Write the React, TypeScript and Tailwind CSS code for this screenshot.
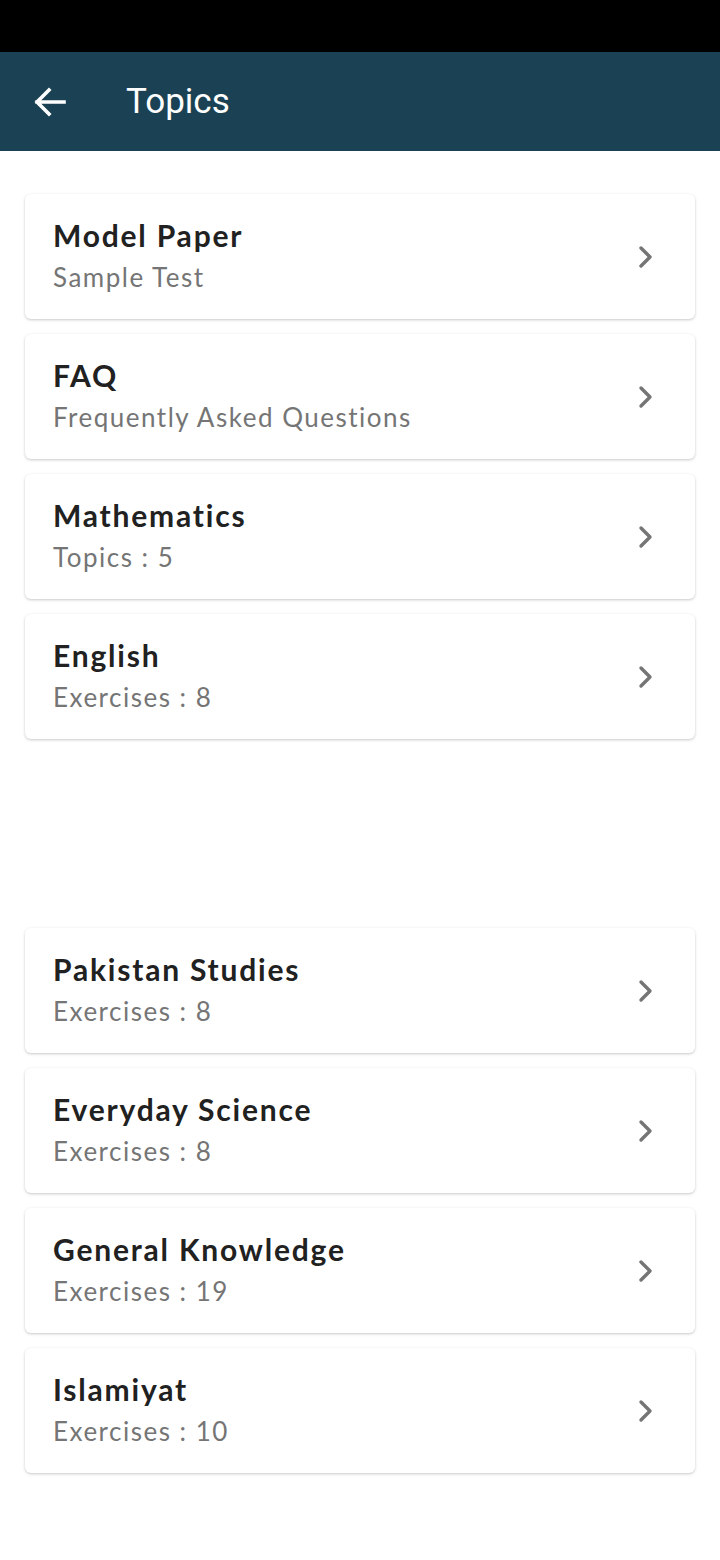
import React from "react";

const top = [
  { t: "Model Paper", s: "Sample Test" },
  { t: "FAQ", s: "Frequently Asked Questions" },
  { t: "Mathematics", s: "Topics : 5" },
  { t: "English", s: "Exercises : 8" },
];
const bottom = [
  { t: "Pakistan Studies", s: "Exercises : 8" },
  { t: "Everyday Science", s: "Exercises : 8" },
  { t: "General Knowledge", s: "Exercises : 19" },
  { t: "Islamiyat", s: "Exercises : 10" },
];

function Card({ t, s }: { t: string; s: string }) {
  return (
    <div className="h-[125px] bg-white rounded-[6px] shadow-[0_1px_3px_rgba(0,0,0,0.22)] flex items-center pl-[28px] pr-[40px]">
      <div className="flex-1 flex flex-col">
        <div className="text-[30px] leading-[36px] font-bold text-[#212121] tracking-[1.8px]">{t}</div>
        <div className="mt-[4px] text-[26px] leading-[40px] text-[#757575] tracking-[1.5px]">{s}</div>
      </div>
      <svg width="18" height="24" viewBox="0 0 18 24" className="shrink-0">
        <path d="M4 3 L13 12 L4 21" fill="none" stroke="#757575" strokeWidth="3.4" strokeLinecap="round" strokeLinejoin="round" />
      </svg>
    </div>
  );
}

export default function App() {
  return (
    <div className="w-[720px] min-h-[1560px] bg-white" style={{ fontFamily: "Lato, 'Noto Sans', sans-serif" }}>
      <div className="h-[52px] bg-black" />
      <div className="h-[99px] bg-[#1b4254] flex items-center">
        <svg width="32" height="30" viewBox="0 0 32 30" className="ml-[34px]">
          <path d="M30 15 H3 M15 3 L3 15 L15 27" fill="none" stroke="white" strokeWidth="3.6" strokeLinecap="square" />
        </svg>
        <div className="ml-[60px] text-white text-[35px] leading-none" style={{ fontFamily: "Roboto, sans-serif" }}>
          Topics
        </div>
      </div>
      <div className="px-[25px] pt-[43px] flex flex-col gap-[15px]">
        {top.map((c) => (
          <Card key={c.t} {...c} />
        ))}
        <div className="h-[159px]" />
        {bottom.map((c) => (
          <Card key={c.t} {...c} />
        ))}
      </div>
    </div>
  );
}
